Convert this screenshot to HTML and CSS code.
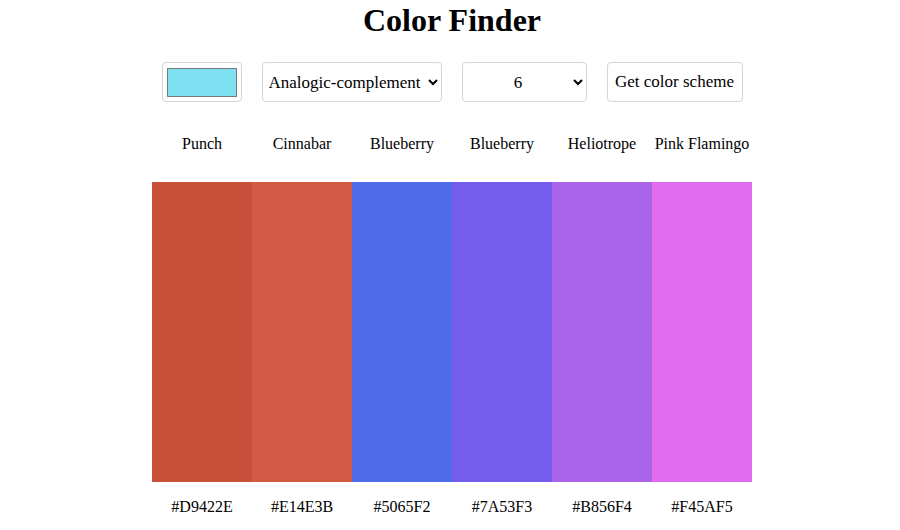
FILE: index.html
```html
<!DOCTYPE html>
<html lang="en">
<head>
    <meta charset="UTF-8">
    <meta name="viewport" content="width=device-width, initial-scale=1.0">
    <title>Color Finder</title>
    <link rel="stylesheet" href="styles.css">
</head>
<body>
    <h1 class="title">Color Finder</h1>
    <form class="controls">
        <div class="swatch-box">
            <div class="swatch"></div>
        </div>
        <select class="control mode">
            <option>Analogic-complement</option>
        </select>
        <select class="control count">
            <option>6</option>
        </select>
        <button type="button" class="control get-btn">Get color scheme</button>
    </form>
    <div class="scheme">
        <div class="col">
            <p class="name">Punch</p>
            <div class="bar c1"></div>
            <p class="hex">#D9422E</p>
        </div>
        <div class="col">
            <p class="name">Cinnabar</p>
            <div class="bar c2"></div>
            <p class="hex">#E14E3B</p>
        </div>
        <div class="col">
            <p class="name">Blueberry</p>
            <div class="bar c3"></div>
            <p class="hex">#5065F2</p>
        </div>
        <div class="col">
            <p class="name">Blueberry</p>
            <div class="bar c4"></div>
            <p class="hex">#7A53F3</p>
        </div>
        <div class="col">
            <p class="name">Heliotrope</p>
            <div class="bar c5"></div>
            <p class="hex">#B856F4</p>
        </div>
        <div class="col">
            <p class="name">Pink Flamingo</p>
            <div class="bar c6"></div>
            <p class="hex">#F45AF5</p>
        </div>
    </div>
</body>
</html>
```

FILE: styles.css
```css
* {
    margin: 0;
    padding: 0;
    box-sizing: border-box;
}

body {
    font-family: 'Liberation Serif', 'Times New Roman', serif;
    background: #ffffff;
    color: #000;
    display: flex;
    flex-direction: column;
    align-items: center;
    padding-left: 4px;
}

.title {
    font-size: 32px;
    font-weight: bold;
    line-height: 40px;
}

.controls {
    display: flex;
    gap: 20px;
    margin-top: 22px;
}

.swatch-box {
    width: 80px;
    height: 40px;
    border: 1px solid #d4d4dc;
    border-radius: 4px;
    padding: 5px 4px 4px;
}

.swatch {
    width: 100%;
    height: 100%;
    background: #7fe0f2;
    border: 1px solid #7a7a7a;
}

.control {
    height: 40px;
    border: 1px solid #d4d4dc;
    border-radius: 4px;
    background: #fff;
    font-family: 'Liberation Serif', 'Times New Roman', serif;
    font-size: 17px;
    color: #000;
}

.mode {
    width: 180px;
    padding-left: 2px;
}

.count {
    width: 125px;
    text-align: center;
}

.get-btn {
    width: 136px;
    padding: 0 4px;
}

.scheme {
    display: flex;
    margin-top: 30px;
}

.col {
    width: 100px;
    display: flex;
    flex-direction: column;
    align-items: center;
    font-size: 16px;
}

.name {
    height: 50px;
    padding-top: 2px;
    line-height: 20px;
}

.bar {
    width: 100%;
    height: 300px;
}

.hex {
    margin-top: 15px;
    line-height: 20px;
}

.c1 { background: #c84f3a; }
.c2 { background: #d25a47; }
.c3 { background: #506be8; }
.c4 { background: #745deb; }
.c5 { background: #a964e9; }
.c6 { background: #e26cee; }
```
